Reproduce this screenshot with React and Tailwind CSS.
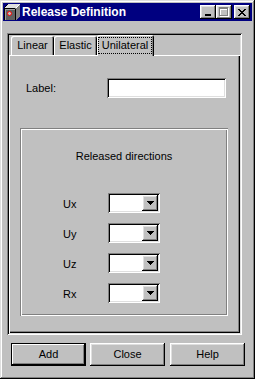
import React from "react";

const raised =
  "shadow-[inset_-1px_-1px_#000,inset_1px_1px_#fff,inset_-2px_-2px_#808080,inset_2px_2px_#dfdfdf]";
const sunken =
  "shadow-[inset_1px_1px_#808080,inset_-1px_-1px_#fff,inset_2px_2px_#000,inset_-2px_-2px_#dfdfdf]";

function AppIcon() {
  return (
    <svg width="16" height="16" viewBox="0 0 16 16" shapeRendering="crispEdges">
      <polygon points="0,4 4,0 16,0 12,4" fill="#dfdfdf" />
      <polygon points="12,4 16,0 16,12 12,16" fill="#808080" />
      <rect x="0" y="4" width="12" height="12" fill="#a0a0a0" />
      <rect x="2" y="6" width="10" height="10" fill="#606060" />
      <rect x="0" y="4" width="12" height="1" fill="#000" />
      <rect x="0" y="4" width="1" height="12" fill="#000" />
      <rect x="11" y="4" width="1" height="12" fill="#000" />
      <line x1="0.5" y1="3.5" x2="3.5" y2="0.5" stroke="#000" shapeRendering="auto" />
      <line x1="11.5" y1="4.5" x2="15.5" y2="0.5" stroke="#fff" shapeRendering="auto" />
      <circle cx="5.5" cy="9.5" r="2" fill="#c0c0c0" stroke="#ff0000" strokeWidth="1" shapeRendering="auto" />
    </svg>
  );
}

function TitleButton({ children }) {
  return (
    <div className={`w-[16px] h-[14px] bg-[#c0c0c0] flex items-center justify-center ${raised}`}>
      {children}
    </div>
  );
}

function Combo() {
  return (
    <div className={`w-[52px] h-[20px] p-[2px] flex bg-white ${sunken}`}>
      <div className="flex-1 bg-white" />
      <div className={`w-[16px] h-full bg-[#c0c0c0] flex items-center justify-center ${raised}`}>
        <svg width="7" height="4" viewBox="0 0 7 4" shapeRendering="crispEdges">
          <rect x="0" y="0" width="7" height="1" fill="#000" />
          <rect x="1" y="1" width="5" height="1" fill="#000" />
          <rect x="2" y="2" width="3" height="1" fill="#000" />
          <rect x="3" y="3" width="1" height="1" fill="#000" />
        </svg>
      </div>
    </div>
  );
}

function Tab({ label, width, active }) {
  if (active) {
    return (
      <div
        className={`relative z-10 -mb-px h-[21px] bg-[#c0c0c0] rounded-t-[2px] pl-[1px] pt-[2px] pr-[2px] pb-[2px] shadow-[inset_1px_1px_#fff,inset_-1px_0_#000,inset_-2px_0_#808080] ${width}`}
      >
        <div className="h-full border border-dotted border-black flex items-center justify-center">
          {label}
        </div>
      </div>
    );
  }
  return (
    <div
      className={`h-[19px] bg-[#c0c0c0] rounded-t-[2px] flex items-center justify-center shadow-[inset_1px_1px_#fff,inset_-1px_0_#000,inset_-2px_0_#808080] ${width}`}
    >
      {label}
    </div>
  );
}

function Button({ label, isDefault }) {
  const cls = isDefault
    ? "shadow-[inset_0_0_0_1px_#000,inset_-2px_-2px_#000,inset_2px_2px_#fff,inset_-3px_-3px_#808080]"
    : raised;
  return (
    <div className={`w-[75px] h-[23px] bg-[#c0c0c0] flex items-center justify-center ${cls}`}>
      {label}
    </div>
  );
}

export default function App() {
  const dirs = ["Ux", "Uy", "Uz", "Rx"];
  return (
    <div className="w-[255px] h-[379px] bg-[#c0c0c0] p-[3px] flex flex-col font-['Liberation_Sans',Arial,sans-serif] text-[11px] leading-[13px] text-black shadow-[inset_-1px_-1px_#000,inset_1px_1px_#dfdfdf,inset_-2px_-2px_#808080,inset_2px_2px_#fff]">
      {/* title bar */}
      <div className="h-[18px] bg-[#000080] flex items-center pl-[1px] pr-[2px]">
        <AppIcon />
        <span className="ml-[2px] text-white font-bold text-[12px] leading-[14px]">
          Release Definition
        </span>
        <div className="ml-auto flex items-center">
          <TitleButton>
            <svg width="6" height="2" className="mt-[6px] -ml-[1px]">
              <rect width="6" height="2" fill="#000" />
            </svg>
          </TitleButton>
          <TitleButton>
            <svg width="10" height="10" viewBox="0 0 10 10" shapeRendering="crispEdges" className="-ml-[1px]">
              <rect x="1.5" y="1.5" width="8" height="8" fill="none" stroke="#fff" />
              <rect x="1" y="2" width="8" height="1" fill="#fff" />
              <rect x="0.5" y="0.5" width="8" height="8" fill="none" stroke="#808080" />
              <rect x="0" y="1" width="9" height="1" fill="#808080" />
            </svg>
          </TitleButton>
          <div className="ml-[2px]">
            <TitleButton>
              <svg width="8" height="7" viewBox="0 0 8 7" shapeRendering="crispEdges" className="-ml-[1px]">
                <rect x="0" y="0" width="2" height="1" fill="#000" />
                <rect x="6" y="0" width="2" height="1" fill="#000" />
                <rect x="1" y="1" width="2" height="1" fill="#000" />
                <rect x="5" y="1" width="2" height="1" fill="#000" />
                <rect x="2" y="2" width="4" height="1" fill="#000" />
                <rect x="3" y="3" width="2" height="1" fill="#000" />
                <rect x="2" y="4" width="4" height="1" fill="#000" />
                <rect x="1" y="5" width="2" height="1" fill="#000" />
                <rect x="5" y="5" width="2" height="1" fill="#000" />
                <rect x="0" y="6" width="2" height="1" fill="#000" />
                <rect x="6" y="6" width="2" height="1" fill="#000" />
              </svg>
            </TitleButton>
          </div>
        </div>
      </div>

      {/* tab frame */}
      <div className={`ml-[4px] mt-[12px] w-[235px] h-[302px] p-[2px] flex flex-col ${sunken}`}>
        <div className="h-[20px] flex items-end pl-[2px]">
          <Tab label="Linear" width="w-[43px]" />
          <Tab label="Elastic" width="w-[43px]" />
          <Tab label="Unilateral" width="w-[57px]" active />
        </div>
        <div className="flex-1 flex flex-col shadow-[inset_1px_1px_#fff,inset_-1px_-1px_#000,inset_-2px_-2px_#808080]">
          <div className="mt-[23px] flex items-center pl-[17px]">
            <span className="w-[81px]">Label:</span>
            <div className={`w-[119px] h-[20px] bg-white ${sunken}`} />
          </div>

          <div className="ml-[11px] mt-[30px] w-[208px] h-[188px] pt-[22px] flex flex-col shadow-[inset_1px_1px_#808080,inset_-1px_-1px_#fff,inset_2px_2px_#fff,inset_-2px_-2px_#808080]">
            <div className="text-center">Released directions</div>
            <div className="mt-[30px] flex flex-col gap-[10px] pl-[43px]">
              {dirs.map((d) => (
                <div key={d} className="flex items-center h-[20px]">
                  <span className="w-[45px] pt-[2px]">{d}</span>
                  <Combo />
                </div>
              ))}
            </div>
          </div>
        </div>
      </div>

      {/* buttons */}
      <div className="mt-[8px] ml-[8px] flex">
        <Button label="Add" isDefault />
        <div className="ml-[4px]">
          <Button label="Close" />
        </div>
        <div className="ml-[5px]">
          <Button label="Help" />
        </div>
      </div>
    </div>
  );
}
